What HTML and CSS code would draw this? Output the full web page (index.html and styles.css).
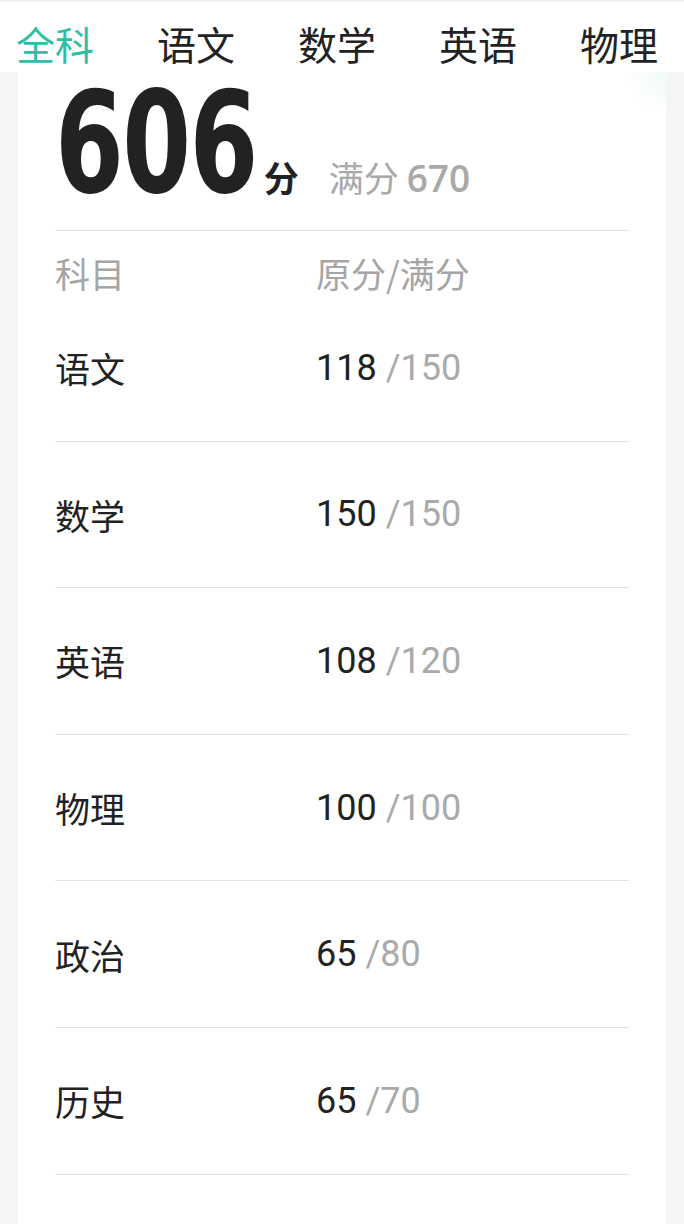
FILE: index.html
```html
<!DOCTYPE html>
<html lang="zh-CN">
<head>
<meta charset="utf-8">
<title>成绩</title>
<link rel="stylesheet" href="styles.css">
</head>
<body>
<nav class="tabs">
  <span class="tab active">全科</span>
  <span class="tab">语文</span>
  <span class="tab">数学</span>
  <span class="tab">英语</span>
  <span class="tab">物理</span>
</nav>
<main class="card">
  <div class="total">
    <span class="total-num">606</span>
    <span class="total-unit">分</span>
    <span class="total-full">满分 <span class="total-full-num">670</span></span>
  </div>
  <div class="head-row">
    <span>科目</span>
    <span>原分/满分</span>
  </div>
  <div class="row"><span class="subj">语文</span><span class="score">118 <span class="full">/150</span></span></div>
  <div class="row"><span class="subj">数学</span><span class="score">150 <span class="full">/150</span></span></div>
  <div class="row"><span class="subj">英语</span><span class="score">108 <span class="full">/120</span></span></div>
  <div class="row"><span class="subj">物理</span><span class="score">100 <span class="full">/100</span></span></div>
  <div class="row"><span class="subj">政治</span><span class="score">65 <span class="full">/80</span></span></div>
  <div class="row"><span class="subj">历史</span><span class="score">65 <span class="full">/70</span></span></div>
</main>
</body>
</html>
```
FILE: styles.css
```css
html, body {
  margin: 0;
  padding: 0;
  background: #f3f5f7;
  font-family: "Noto Sans CJK SC", "Noto Sans", sans-serif;
  color: #222;
}

.tabs {
  box-sizing: border-box;
  height: 72px;
  background: #fff;
  border-top: 2px solid #eef0f2;
  padding: 22px 0 0 16px;
  display: flex;
  gap: 63px;
  font-size: 39px;
  line-height: 39px;
  white-space: nowrap;
  overflow: hidden;
}

.tab {
  color: #222;
}

.tab.active {
  color: #2dbfa5;
}

.card {
  margin: 0 18px;
  padding: 0 37px 60px;
  background: #fff radial-gradient(circle at 100% 0, rgba(120, 215, 195, 0.12) 0, rgba(255, 255, 255, 0) 40px);
  min-height: 1152px;
  box-sizing: border-box;
}

.total {
  display: flex;
  align-items: baseline;
  height: 159px;
  border-bottom: 1px solid #e2e4e6;
  box-sizing: border-box;
}

.total-num {
  display: inline-block;
  font-family: "DejaVu Sans Condensed", "DejaVu Sans", sans-serif;
  font-weight: 700;
  font-size: 141px;
  line-height: 142px;
  color: #222;
  letter-spacing: -2px;
  transform: scaleX(0.78);
  transform-origin: 0 50%;
  margin-right: -58px;
}

.total-unit {
  font-size: 35px;
  font-weight: 700;
  margin-left: 8px;
  color: #222;
}

.total-full {
  margin-left: 30px;
  font-size: 35px;
  color: #a9a9a9;
}

.total-full-num {
  font-family: "Open Sans", "Noto Sans", sans-serif;
  font-weight: 600;
  font-size: 37px;
}

.head-row {
  display: grid;
  grid-template-columns: 261px 1fr;
  height: 64px;
  box-sizing: border-box;
  padding-top: 24px;
  font-size: 35px;
  line-height: 36px;
  color: #a5a5a5;
}

.row {
  display: grid;
  grid-template-columns: 261px 1fr;
  align-items: center;
  height: 146.6px;
  box-sizing: border-box;
  border-bottom: 1px solid #e2e4e6;
  font-size: 35px;
}

.subj {
  color: #222;
}

.score {
  font-family: Roboto, "Noto Sans", sans-serif;
  font-size: 36px;
  color: #222;
}

.full {
  color: #aaa;
}
```
